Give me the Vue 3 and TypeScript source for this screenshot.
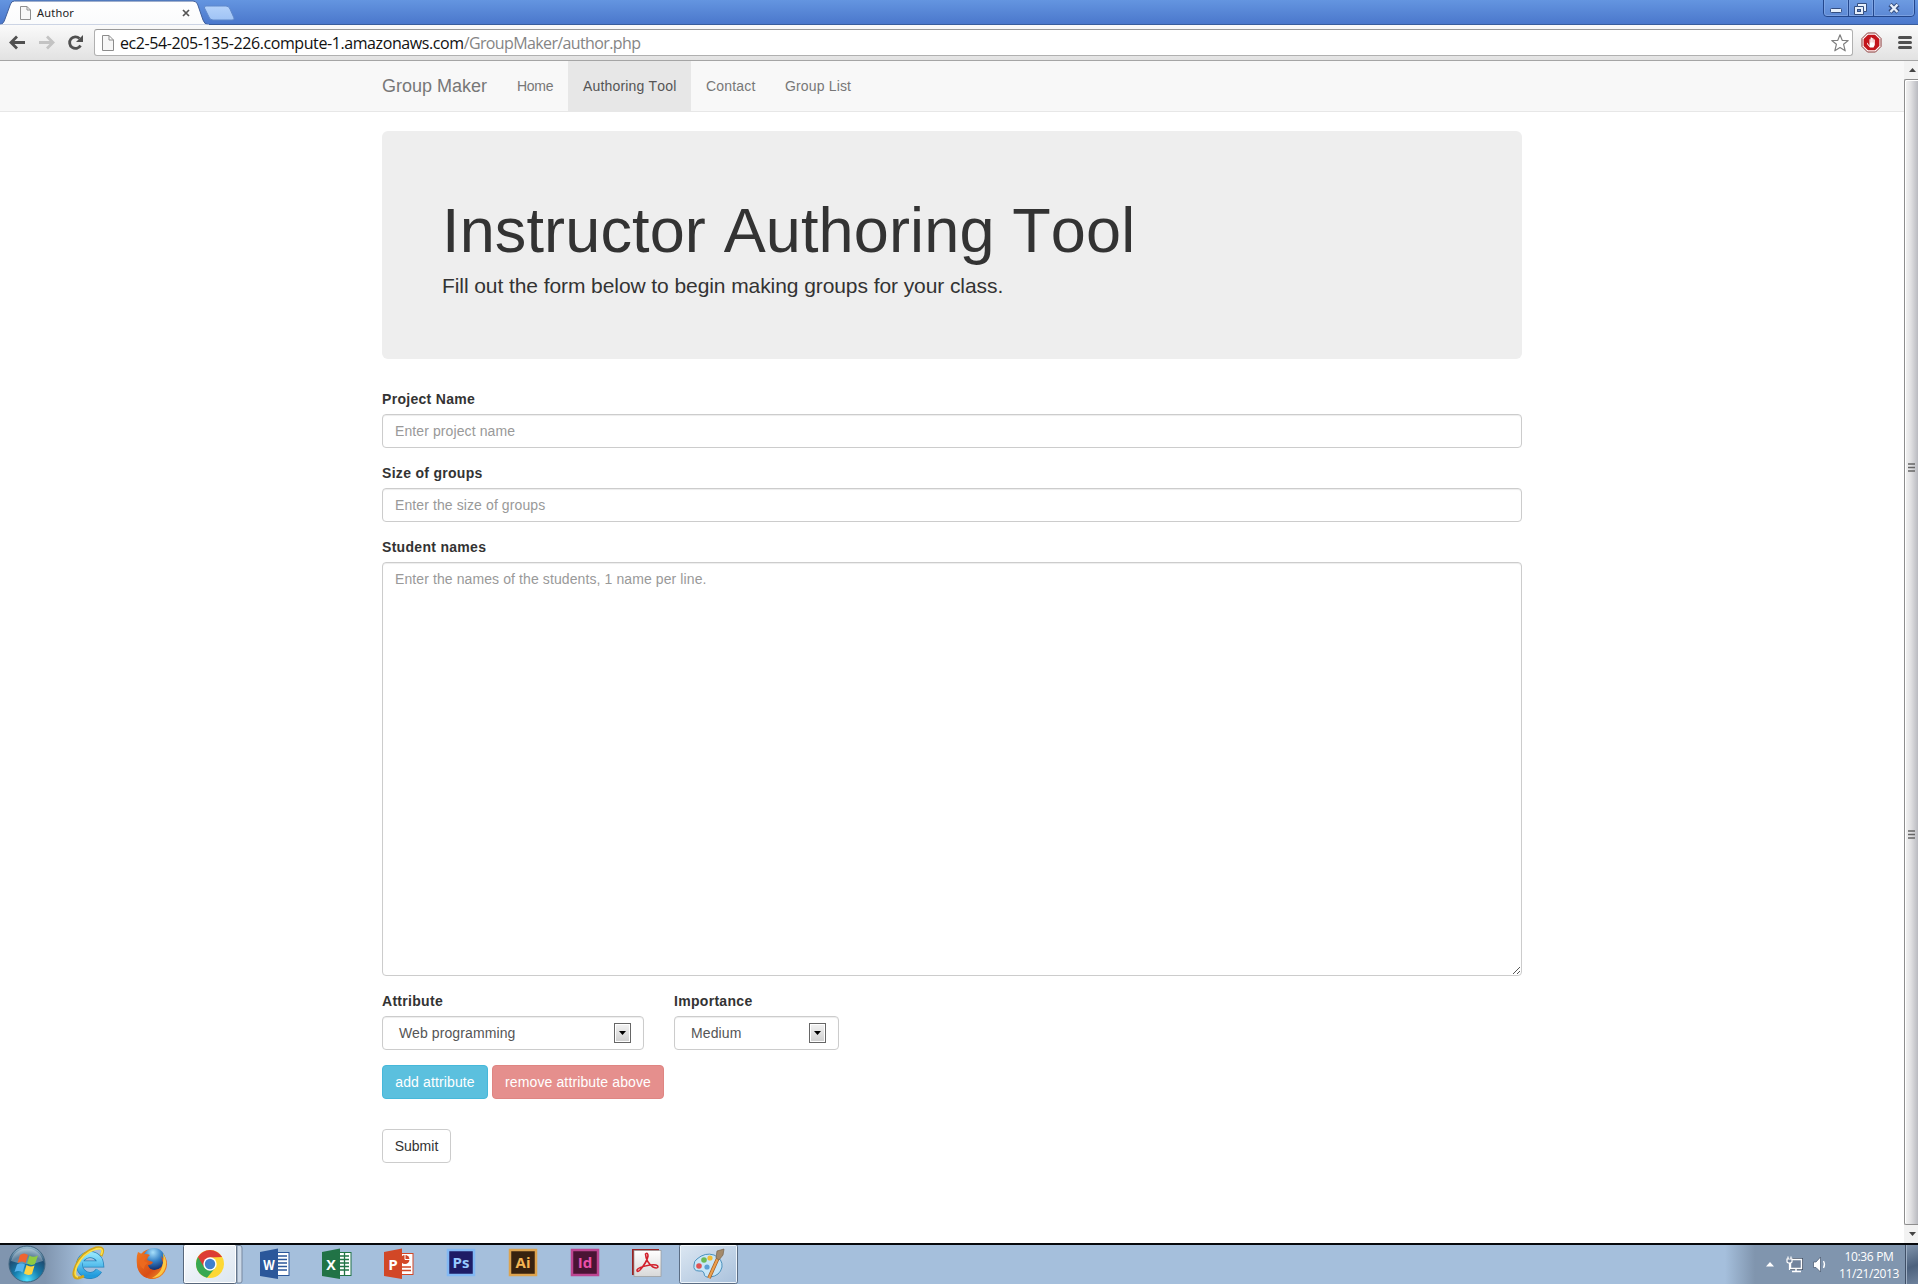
<script setup lang="ts">
import { ref } from 'vue'

interface NavItem { label: string; cls: string; active?: boolean }

const navItems: NavItem[] = [
  { label: 'Home', cls: 'home' },
  { label: 'Authoring Tool', cls: 'tool', active: true },
  { label: 'Contact', cls: 'contact' },
  { label: 'Group List', cls: 'list' },
]
const project = ref('')
const size = ref('')
const students = ref('')
</script>

<template>
  <div class="screen">
    <header class="titlebar">
      <svg class="tabs" width="240" height="25" viewBox="0 0 240 25">
        <defs>
          <linearGradient id="tabFill" x1="0" y1="0" x2="0" y2="1">
            <stop offset="0" stop-color="#fff" /><stop offset="1" stop-color="#fafbfc" />
          </linearGradient>
          <linearGradient id="newTab" x1="0" y1="0" x2="0" y2="1">
            <stop offset="0" stop-color="#b4d2fa" /><stop offset="1" stop-color="#9fc3f5" />
          </linearGradient>
        </defs>
        <path d="M0 24.500C3 24 4 22 5 19L10.500 4Q11.500 1 14.500 1H193Q196 1 197.500 4L203 20Q204.500 24.500 208 24.500V25H0Z" fill="url(#tabFill)" stroke="#41609c" />
        <path d="M0 25H209" stroke="#fafbfc" />
        <path d="M206 6H226Q229 6 230 9L234 18Q234.500 20 232 20H213Q210 20 209 17L204.500 8Q204 6 206 6Z" fill="url(#newTab)" stroke="#5f88ca" />
        <path d="M20.500 6.500H27L30.500 10V19.500H20.500ZM27 6.500V10H30.500" fill="#f7f7f7" stroke="#8f8f8f" />
        <path d="M183 10L189 16M189 10L183 16" stroke="#555" stroke-width="1.700" />
      </svg>
      <span class="tab-title">Author</span>
      <div class="winbtns">
        <svg width="92" height="17" viewBox="0 0 92 17">
          <path d="M.5 -1V13Q.5 16.500 4 16.500H88Q91.500 16.500 91.500 13V-1M25.500 0V16M50.500 0V16" fill="#fff" fill-opacity=".06" stroke="#23478d" />
          <path d="M1.500 0V13Q1.500 15.500 4 15.500H24.500V0M26.500 0V15.500H49.500V0M51.500 0V15.500H88Q90.500 15.500 90.500 13V0" fill="none" stroke="#86aae6" stroke-opacity=".7" />
          <rect x="7.500" y="8.500" width="11" height="4" rx="1" fill="#e6effb" stroke="#344e80" />
          <path d="M34.500 3.500H43.500V11.500H40.500V14.500H31.500V6.500H34.500Z" fill="#e6effb" stroke="#344e80" />
          <path d="M34.500 6.500H40.500V11.500" fill="none" stroke="#344e80" /><rect x="34.500" y="9.500" width="3" height="2" fill="#5e87cf" stroke="#344e80" />
          <path d="M67 4.500L75 12M75 4.500L67 12" stroke="#344e80" stroke-width="4.600" /><path d="M67.500 4.500L74.500 12M74.500 4.500L67.500 12" stroke="#e6effb" stroke-width="2.400" />
        </svg>
      </div>
    </header>

    <div class="toolbar">
      <svg class="navicons" width="94" height="35" viewBox="0 0 94 35" fill="none">
        <path d="M25 17.500H12M17 11.500L11 17.500L17 23.500" stroke="#505050" stroke-width="2.800" />
        <path d="M39 17.500H52M47 11.500L53 17.500L47 23.500" stroke="#c3c3c3" stroke-width="2.800" />
        <path d="M80.500 20.500A5.800 5.800 0 1 1 79.500 13.500" stroke="#505050" stroke-width="2.800" /><path d="M83 10V17H76Z" fill="#505050" />
      </svg>
      <div class="omnibox">
        <svg width="25" height="25" viewBox="0 0 25 25"><path d="M7.500 5.500H14L18.500 10V20.500H7.500ZM14 5.500V10H18.500" fill="#f7f7f7" stroke="#8c8c8c" /></svg>
        <span class="url"><b>ec2-54-205-135-226.compute-1.amazonaws.com</b>/GroupMaker/author.php</span>
        <svg class="star" width="20" height="20" viewBox="0 0 20 20"><path d="M10 1.800L12.200 7.300L18.200 7.500L13.600 11.300L15.200 17.800L10 14.500L4.800 17.800L6.400 11.300L1.800 7.500L7.800 7.300Z" fill="#fff" stroke="#808080" stroke-width="1.200" stroke-linejoin="round" /></svg>
      </div>
      <svg class="exts" width="65" height="35" viewBox="0 0 65 35">
        <path d="M14.500 8H22.500L28 13.500V21.500L22.500 27H14.500L9 21.500V13.500Z" fill="#fff" stroke="#8a3535" />
        <path d="M15 9.700H22L26.400 14V21L22 25.300H15L10.600 21V14Z" fill="#c3141b" />
        <path d="M14.300 17.500L16.500 21V14.200H17.600V12.600H19V13.300H20.400V14.500H21.800V20L20.500 22.500H17L14 19Z" fill="#fff" />
        <path d="M17.700 14V17.500M19.200 14V17.500M20.600 14.500V17.500" stroke="#dc7377" stroke-width=".4" />
        <path d="M46.500 12.500H57.500M46.500 17.500H57.500M46.500 22.500H57.500" stroke="#505050" stroke-width="3" stroke-linecap="round" />
      </svg>
    </div>

    <div class="viewport">
      <div class="page">
        <nav class="navbar">
          <div class="container nav-row">
            <a class="brand">Group Maker</a>
            <a v-for="n in navItems" :key="n.label" class="nav-link" :class="[n.cls, { active: n.active }]"><span>{{ n.label }}</span></a>
          </div>
        </nav>
        <main class="container">
          <section class="jumbotron">
            <h1>Instructor Authoring Tool</h1>
            <p>Fill out the form below to begin making groups for your class.</p>
          </section>
          <form @submit.prevent>
            <div class="group">
              <label>Project Name</label>
              <input v-model="project" class="control" placeholder="Enter project name" />
            </div>
            <div class="group">
              <label>Size of groups</label>
              <input v-model="size" class="control" placeholder="Enter the size of groups" />
            </div>
            <div class="group">
              <label>Student names</label>
              <div class="area">
                <textarea v-model="students" class="control" placeholder="Enter the names of the students, 1 name per line."></textarea>
                <svg class="grip" width="9" height="9" viewBox="0 0 9 9"><path d="M1 8L8 1M5 8L8 5" stroke="#555" /></svg>
              </div>
            </div>
            <div class="attr-row">
              <div class="group attr">
                <label>Attribute</label>
                <div class="control select"><span>Web programming</span><i class="drop"><svg width="7" height="4"><path d="M0 0H7L3.500 4Z" /></svg></i></div>
              </div>
              <div class="group imp">
                <label>Importance</label>
                <div class="control select"><span>Medium</span><i class="drop"><svg width="7" height="4"><path d="M0 0H7L3.500 4Z" /></svg></i></div>
              </div>
            </div>
            <div class="btn-row">
              <button type="button" class="btn info">add attribute</button>
              <button type="button" class="btn danger">remove attribute above</button>
            </div>
            <button class="btn submit">Submit</button>
          </form>
        </main>
      </div>
      <aside class="scroll">
        <div class="arrow"><svg width="7" height="4"><path d="M0 4H7L3.500 0Z" fill="#444" /></svg></div>
        <div class="thumb">
          <svg class="ridge r1" width="7" height="9"><path d="M0 1H7M0 4.500H7M0 8H7" stroke="#666" stroke-width="1.500" /></svg>
          <svg class="ridge r2" width="7" height="9"><path d="M0 1H7M0 4.500H7M0 8H7" stroke="#666" stroke-width="1.500" /></svg>
        </div>
        <div class="arrow"><svg width="7" height="4"><path d="M0 0H7L3.500 4Z" fill="#444" /></svg></div>
      </aside>
    </div>

    <footer class="taskbar">
      <svg class="apps" width="760" height="39" viewBox="0 0 760 39">
        <defs>
          <radialGradient id="orb" cx=".5" cy=".95" r=".9"><stop offset="0" stop-color="#4fe0ff" /><stop offset=".4" stop-color="#1680b0" /><stop offset=".75" stop-color="#1d4c72" /><stop offset="1" stop-color="#91b3c9" /></radialGradient>
          <linearGradient id="ie" x1="0" y1="0" x2="0" y2="1"><stop offset="0" stop-color="#8fe3fc" /><stop offset="1" stop-color="#219bdd" /></linearGradient>
          <linearGradient id="fox" x1="0" y1="0" x2="1" y2="1"><stop offset="0" stop-color="#f07a22" /><stop offset=".6" stop-color="#d94d15" /><stop offset="1" stop-color="#f5a42c" /></linearGradient>
          <radialGradient id="globe" cx=".45" cy=".2" r=".8"><stop offset="0" stop-color="#a7e0fb" /><stop offset=".5" stop-color="#3783c7" /><stop offset="1" stop-color="#122f70" /></radialGradient>
          <linearGradient id="act" x1="0" y1="0" x2="1" y2="1"><stop offset="0" stop-color="#fbfcfe" /><stop offset=".5" stop-color="#e9eff6" /><stop offset="1" stop-color="#dce6f0" /></linearGradient>
          <linearGradient id="paint" x1="0" y1="0" x2="1" y2="1"><stop offset="0" stop-color="#dce7f2" /><stop offset="1" stop-color="#a9c1dc" /></linearGradient>
          <linearGradient id="pdf" x1="0" y1="0" x2="0" y2="1"><stop offset="0" stop-color="#fff" /><stop offset="1" stop-color="#d8d8d8" /></linearGradient>
        </defs>
        <g>
          <circle cx="27" cy="19" r="18" fill="url(#orb)" stroke="#416680" />
          <path d="M11 16A16.500 16.500 0 0 1 43 16Q27 22 11 16Z" fill="#fff" opacity=".3" />
          <path d="M20 10Q24 7 28 10L25.500 18Q22 15 17.500 18Z" fill="#ee6331" /><path d="M29.500 10.500Q33 13 38 10.500L35 19Q31 21 27 18.500Z" fill="#8fcb43" />
          <path d="M17 19.500Q21 17 25 19.500L22.500 27.500Q19 25 14.500 27Z" fill="#56b3ed" /><path d="M26.500 20Q30 22.500 34.500 20.500L32 29Q28 31 24 28.500Z" fill="#fcd443" />
        </g>
        <g fill="none">
          <path d="M99 25.500A10.500 10.500 0 1 1 100.500 19H83" stroke="#2581b9" stroke-width="7" />
          <path d="M99 25.500A10.500 10.500 0 1 1 100.500 19H83" stroke="url(#ie)" stroke-width="5.500" />
          <path d="M101 11Q106 1 96 3Q82 7 76 21Q71 33 78 33Q80 33 84 31" stroke="#d2a51a" stroke-width="3" /><path d="M101 10Q105 2 96 4Q83 8 77 21Q73 31 78 32" stroke="#fbe04f" stroke-width="1.800" />
        </g>
        <g>
          <circle cx="152" cy="19" r="15" fill="url(#fox)" /><circle cx="154" cy="14" r="11" fill="url(#globe)" />
          <path d="M138 7Q141 8 142 10Q146 8 150 10Q147 12 147 15L153 17Q152 20 148 20Q149 25 155 25Q162 24 163 18L161 11Q167 17 166 23Q162 34 151 34Q139 32 137 20Q136 12 138 7Z" fill="url(#fox)" />
          <path d="M163 8Q169 17 164 26Q160 33 152 33Q160 29 162 22Q164 16 163 8Z" fill="#fbc744" /><path d="M139 14Q142 12 146 12L144 16L148 18Q144 20 144 24Q139 22 139 14Z" fill="#ec691e" />
        </g>
        <g>
          <rect x="183.500" y="-.5" width="53" height="39" rx="2" fill="url(#act)" stroke="#57677c" /><rect x="184.500" y=".5" width="51" height="37" rx="1" fill="none" stroke="#fff" />
          <path d="M237 .5H240Q242 .5 242 3V36Q242 38 240 38H237Z" fill="#cbd8e7" stroke="#76889f" />
          <circle cx="210" cy="19" r="14" fill="#fdd835" />
          <path d="M210 19L197.900 12A14 14 0 0 0 207 32.700L216 22Z" fill="#38a852" /><path d="M197.900 12A14 14 0 0 1 222.100 12L210 12.500L204 22Z" fill="#dd3d33" /><circle cx="210" cy="19" r="6.700" fill="#fff" /><circle cx="210" cy="19" r="5.200" fill="#3f80cc" />
        </g>
        <g>
          <rect x="271" y="7.500" width="18" height="23" fill="#fff" stroke="#2b579a" /><path d="M278 11H287M278 14.500H287M278 18H287M278 21.500H287M278 25H287" stroke="#2b579a" stroke-width="1.300" /><path d="M260 7L278 3.500V34L260 31Z" fill="#2b579a" />
          <text x="269" y="24.500" textLength="11.500" lengthAdjust="spacingAndGlyphs" class="ms">W</text>
          <rect x="333" y="7.500" width="18" height="23" fill="#fff" stroke="#217346" /><path d="M340 11H349M340 14.500H349M340 18H349M340 21.500H349M340 25H349M344.500 8V30" stroke="#217346" stroke-width="1.300" /><path d="M322 7L340 3.500V34L322 31Z" fill="#217346" />
          <text x="331" y="24.500" textLength="9.500" lengthAdjust="spacingAndGlyphs" class="ms">X</text>
          <rect x="395" y="8.500" width="18" height="21" fill="#fff" stroke="#d24726" /><circle cx="405" cy="14.500" r="4.500" fill="#d24726" /><path d="M405 10V14.500H410" stroke="#fff" fill="none" /><path d="M402 22H411M402 25.500H411" stroke="#d24726" stroke-width="1.300" /><path d="M384 7L402 3.500V34L384 31Z" fill="#d24726" />
          <text x="393" y="25" textLength="9.500" lengthAdjust="spacingAndGlyphs" class="ms">P</text>
        </g>
        <g class="adobe">
          <rect x="448" y="5" width="26" height="25" fill="#1e1c66" stroke="#82b8f4" stroke-width="2.500" /><text x="461" y="22.500" fill="#98c9ff">Ps</text>
          <rect x="510" y="5" width="26" height="25" fill="#38220f" stroke="#dda34e" stroke-width="2.500" /><text x="523" y="22.500" fill="#f5b553">Ai</text>
          <rect x="572" y="5" width="26" height="25" fill="#4a1434" stroke="#bd4590" stroke-width="2.500" /><text x="585" y="22.500" fill="#e94fa9">Id</text>
        </g>
        <g>
          <rect x="632" y="4" width="27" height="26" fill="#922" /><rect x="634" y="5.500" width="27" height="26" fill="url(#pdf)" stroke="#999" stroke-width=".7" />
          <path d="M645.500 9Q648 7 648 11Q647 17 640 25Q637 28 637 25Q638 22 650 20Q658 19 658 22Q657 24 653 22Q646 17 645.500 9Z" fill="none" stroke="#d2202c" stroke-width="1.600" />
        </g>
        <g>
          <rect x="679.500" y="-.5" width="58" height="39" rx="2" fill="url(#paint)" stroke="#5b6d84" /><rect x="680.500" y=".5" width="56" height="37" rx="1" fill="none" stroke="#eef5fb" />
          <path d="M697 14Q705 7 714 10Q723 14 722 22Q720 31 710 32Q704 33 704 28Q703 25 699 26Q693 26 694 20Q694 16 697 14Z" fill="#c8e6f7" stroke="#4b91bd" />
          <circle cx="699" cy="21" r="2.800" fill="#e05252" /><circle cx="704" cy="15" r="2.800" fill="#6cb955" /><circle cx="710" cy="13" r="2.600" fill="#f1bd36" /><circle cx="707" cy="22" r="2.600" fill="#5b9fd4" />
          <path d="M709 33L718 13" stroke="#a05a20" stroke-width="3.600" /><path d="M709 33L718 13" stroke="#eba04e" stroke-width="2.200" /><path d="M716 13L717 6L724 4L723 10L719 15Z" fill="#a48a6b" stroke="#77634c" stroke-width=".7" />
        </g>
      </svg>
      <div class="tray">
        <svg width="65" height="39" viewBox="0 0 65 39">
          <path d="M0 21.500L4 17L8 21.500Z" fill="#fff" />
          <path d="M24.500 14.500H35.500V23.500H24.500Z" fill="#73849d" stroke="#414e62" stroke-width="3" /><path d="M24.500 14.500H35.500V23.500H24.500Z" fill="#73849d" stroke="#fff" stroke-width="1.400" /><path d="M26 26.500H35M30 24V26" stroke="#fff" stroke-width="1.500" /><path d="M21 14H26V16.500Q26 18 23.500 18Q21 18 21 16.500ZM22 14V11.500M25 14V11.500M23.500 18V25" fill="#73849d" stroke="#fff" stroke-width="1.200" />
          <path d="M47.500 17H50L54.500 12V27L50 22.500H47.500Z" fill="#fff" stroke="#46566d" stroke-width=".7" /><path d="M57.500 16Q59.500 19.500 57.500 23" stroke="#fff" fill="none" stroke-width="1.300" />
        </svg>
        <div class="clock"><span class="time">10:36 PM</span><span class="date">11/21/2013</span></div>
        <div class="peek"></div>
      </div>
    </footer>
  </div>
</template>

<style>
body { margin: 0; overflow: hidden; }
</style>
<style scoped>
* { box-sizing: border-box; }
.screen { width: 1918px; height: 1284px; display: flex; flex-direction: column; background: #fff; font: 14px/20px "Liberation Sans", Arial, sans-serif; color: #333; overflow: hidden; }
.titlebar { flex: none; height: 25px; display: flex; background: linear-gradient(#6495e0, #4b78cc 95%, #395d9c 96%); position: relative; }
.tabs { display: block; }
.tab-title { position: absolute; left: 37px; top: 3px; font: 11px/20px "Noto Sans", "Open Sans", sans-serif; color: #222; letter-spacing: .2px; }
.winbtns { margin-left: auto; margin-right: 3px; height: 17px; }
.winbtns svg { display: block; }
.toolbar { flex: none; height: 36px; display: flex; background: linear-gradient(#fafafa, #e2e2e2); border-bottom: 1px solid #a5a5a5; }
.omnibox { width: 1759px; height: 27px; margin-top: 4px; border: 1px solid #b0b0b0; border-top-color: #999; border-radius: 3px; background: #fff; display: flex; align-items: center; }
.url { font: 16px/24px "Open Sans", "Noto Sans", sans-serif; color: #858585; white-space: nowrap; letter-spacing: -.62px; }
.url b { font-weight: 400; color: #111; letter-spacing: -.41px; }
.star { margin-left: auto; margin-right: 2px; }
.viewport { flex: 1; min-height: 0; display: flex; }
.page { flex: 1; background: #fff; }
.container { width: 1140px; margin-left: 382px; }
.navbar { height: 51px; background: #f8f8f8; border-bottom: 1px solid #e7e7e7; }
.nav-row { display: flex; height: 50px; white-space: nowrap; }
.brand { width: 120px; font-size: 18px; line-height: 50px; color: #777; }
.nav-link { padding-left: 15px; line-height: 50px; color: #777; }
.home { width: 66px; letter-spacing: -.3px; }
.tool { width: 123px; height: 51px; letter-spacing: .18px; font-kerning: none; }
.contact { width: 79px; letter-spacing: .17px; }
.list { letter-spacing: .15px; }
.active { background: #e7e7e7; color: #555; }
.jumbotron { height: 228px; margin-top: 19px; padding: 68px 60px 0; background: #eee; border-radius: 6px; white-space: nowrap; }
h1 { margin: 0 0 9px; font-size: 63px; line-height: 63px; font-weight: 400; font-kerning: none; letter-spacing: .14px; }
.jumbotron p { margin: 0; font-size: 21px; line-height: 30px; letter-spacing: -.08px; }
form { margin-top: 30px; }
.group { margin-bottom: 15px; }
label { display: block; height: 20px; margin-bottom: 5px; font-weight: 700; letter-spacing: .3px; }
.control { display: block; width: 100%; height: 34px; padding: 6px 12px; border: 1px solid #ccc; border-radius: 4px; background: #fff; box-shadow: inset 0 1px 1px rgba(0,0,0,.075); font: 14px/20px "Liberation Sans", Arial, sans-serif; letter-spacing: .1px; color: #555; }
.control::placeholder { color: #999; opacity: 1; }
.area { position: relative; }
textarea.control { height: 414px; resize: none; }
.grip { position: absolute; right: 1px; bottom: 1px; }
.attr-row { display: flex; gap: 30px; }
.attr { width: 262px; }
.imp { width: 165px; }
.select { display: flex; align-items: center; justify-content: space-between; padding-left: 16px; }
.drop { width: 17px; height: 20px; border: 1px solid #666; background: linear-gradient(#f3f3f3, #cfcfcf); box-shadow: inset 0 0 0 1px #fff; display: flex; align-items: center; justify-content: center; }
.btn-row { display: flex; gap: 4px; margin-bottom: 30px; }
.btn { height: 34px; padding: 0; border: 1px solid; border-radius: 4px; font: 14px/20px "Liberation Sans", Arial, sans-serif; white-space: nowrap; color: #fff; }
.info { width: 106px; background: #5bc0de; border-color: #46b8da; letter-spacing: .13px; }
.danger { width: 172px; background: #e58f8d; border-color: #df8582; letter-spacing: .13px; }
.submit { width: 69px; background: #fff; border-color: #ccc; color: #333; }
.scroll { width: 14px; background: #f2f2f2; display: flex; flex-direction: column; overflow: hidden; }
.arrow { height: 18px; flex: none; display: flex; align-items: center; padding-left: 5px; }
.thumb { flex: 1; position: relative; border: 1px solid #8e8e8e; border-right: 0; border-radius: 2px 0 0 2px; background: linear-gradient(90deg, #f4f4f4, #e0e0e2 45%, #b9bac0); box-shadow: inset 1px 1px #fff; }
.ridge { position: absolute; left: 3px; }
.r1 { top: 383px; }
.r2 { top: 750px; }
.taskbar { flex: none; height: 41px; display: flex; border-top: 2px solid #06080b; background: linear-gradient(90deg, #8095af 0, #8095af 45px, #a5bfdc 85px, #a5bfdc 1725px, #8095ae 1755px); }
.apps { display: block; }
.ms { font: 700 15px "Open Sans", sans-serif; fill: #fff; text-anchor: middle; }
.adobe text { font: 700 15px "Open Sans", sans-serif; text-anchor: middle; }
.tray { margin-left: auto; display: flex; color: #fff; }
.clock { width: 74px; text-align: center; font: 12px/17px "Open Sans", "Noto Sans", sans-serif; padding: 3px 0 0 2px; letter-spacing: -.35px; display: flex; flex-direction: column; }
.peek { width: 13px; border-left: 1px solid #3f4f66; box-shadow: inset 1px 0 #9fb0c5; background: linear-gradient(160deg, #8195ad, #4c617d 55%, #6e829c); }
</style>
